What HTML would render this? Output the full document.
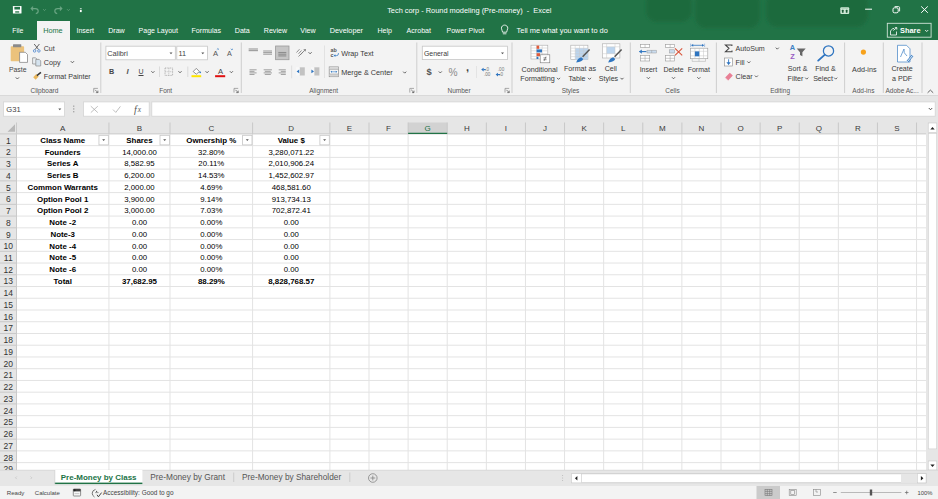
<!DOCTYPE html><html><head><meta charset="utf-8"><style>
*{margin:0;padding:0;box-sizing:border-box}
html,body{width:938px;height:499px;overflow:hidden;background:#e6e6e6;font-family:"Liberation Sans",sans-serif;position:relative;-webkit-font-smoothing:antialiased}
.a{position:absolute;white-space:nowrap}
.t{position:absolute;white-space:nowrap;line-height:1}
svg{position:absolute;left:0;top:0}
</style></head><body><div class="a" style="left:0;top:0;width:938px;height:39.5px;background:#217346"></div><div class="a" style="left:37.1px;top:21.1px;width:32.9px;height:19px;background:#f3f3f3"></div><div class="a" style="left:0;top:39.5px;width:938px;height:55.8px;background:#f3f3f3"></div><div class="a" style="left:0;top:95.3px;width:938px;height:1px;background:#d9d9d9"></div><svg width="938" height="499" viewBox="0 0 938 499"><defs><filter id="bl" x="-20%" y="-50%" width="140%" height="200%"><feGaussianBlur stdDeviation="1.6"/></filter></defs><g fill="#1e6a3e" filter="url(#bl)"><rect x="646" y="-8" width="46" height="30" rx="11"/><rect x="695" y="-8" width="65" height="36" rx="11"/><rect x="766" y="-8" width="102" height="35" rx="12"/></g><rect x="12.9" y="6.0" width="8.6" height="7.5" rx="0.6" fill="#fff"/><rect x="14.4" y="6.8" width="5.6" height="2.7" fill="#217346"/><rect x="15.2" y="11.3" width="4" height="1.3" fill="#217346"/><path d="M31.2,8.6 H35.3 Q38.2,8.6 38.2,11.1 Q38.2,13.4 35.8,13.6 M33.1,6.7 L31.2,8.6 L33.1,10.5" fill="none" stroke="#6aa583" stroke-width="1.15"/><path d="M43.20,9.25 L44.50,10.55 L45.80,9.25" fill="none" stroke="#6aa583" stroke-width="0.8"/><path d="M61.8,8.6 H57.7 Q54.8,8.6 54.8,11.1 Q54.8,13.4 57.2,13.6 M59.9,6.7 L61.8,8.6 L59.9,10.5" fill="none" stroke="#6aa583" stroke-width="1.15"/><path d="M67.10,9.25 L68.40,10.55 L69.70,9.25" fill="none" stroke="#6aa583" stroke-width="0.8"/><rect x="79.9" y="8.2" width="1.8" height="0.8" fill="#fff" opacity="0.8"/><rect x="79.9" y="9.8" width="1.8" height="2.3" fill="#fff"/><rect x="840.3" y="7.3" width="8.9" height="6.6" rx="1" fill="#cfe8d6"/><rect x="841.9" y="9.8" width="1.7" height="3" rx="0.5" fill="#1f5e3a"/><rect x="845.8" y="9.8" width="1.7" height="3" rx="0.5" fill="#1f5e3a"/><line x1="841.5" y1="8.4" x2="848" y2="8.4" stroke="#8fbf9f" stroke-width="0.5"/><line x1="865.1" y1="9.2" x2="872" y2="9.2" stroke="#fff" stroke-width="1"/><rect x="893" y="7.8" width="5.2" height="5" rx="1.4" fill="none" stroke="#fff" stroke-width="1"/><path d="M894.6,6.6 H898.5 Q899.6,6.6 899.6,7.7 V11.4" fill="none" stroke="#fff" stroke-width="0.9"/><path d="M921.2,6.4 L927.8,12.8 M927.8,6.4 L921.2,12.8" stroke="#fff" stroke-width="1"/><rect x="887.3" y="23.3" width="43.8" height="13.9" fill="none" stroke="#d0e3d7" stroke-width="0.9"/><path d="M890.5,35 V31 L893,28.2 L894.3,29 M890.5,35 H896.5 V31.5" fill="none" stroke="#fff" stroke-width="0.8"/><path d="M893.3,30.5 L896.8,27.6 M896.8,27.6 H894.8 M896.8,27.6 V29.6" fill="none" stroke="#fff" stroke-width="0.8"/><path d="M925.20,30.05 L926.70,31.55 L928.20,30.05" fill="none" stroke="#fff" stroke-width="0.9"/><path d="M502.6,32.2 C502.6,30.6 501.4,29.9 501.4,28.2 C501.4,26.4 502.9,25.1 504.6,25.1 C506.3,25.1 507.8,26.4 507.8,28.2 C507.8,29.9 506.6,30.6 506.6,32.2 Z" fill="none" stroke="#fff" stroke-width="0.85"/><line x1="502.8" y1="33.8" x2="506.4" y2="33.8" stroke="#fff" stroke-width="0.8"/><line x1="100.8" y1="42.5" x2="100.8" y2="93" stroke="#c9c9c9" stroke-width="0.9"/><line x1="241.3" y1="42.5" x2="241.3" y2="93" stroke="#c9c9c9" stroke-width="0.9"/><line x1="416.8" y1="42.5" x2="416.8" y2="93" stroke="#c9c9c9" stroke-width="0.9"/><line x1="512.0" y1="42.5" x2="512.0" y2="93" stroke="#c9c9c9" stroke-width="0.9"/><line x1="630.3" y1="42.5" x2="630.3" y2="93" stroke="#c9c9c9" stroke-width="0.9"/><line x1="716.4" y1="42.5" x2="716.4" y2="93" stroke="#c9c9c9" stroke-width="0.9"/><line x1="844.6" y1="42.5" x2="844.6" y2="93" stroke="#c9c9c9" stroke-width="0.9"/><line x1="883.3" y1="42.5" x2="883.3" y2="93" stroke="#c9c9c9" stroke-width="0.9"/><line x1="922.0" y1="42.5" x2="922.0" y2="93" stroke="#c9c9c9" stroke-width="0.9"/><path d="M93.7,92.6 V88.4 H97.9" fill="none" stroke="#777" stroke-width="0.6"/><path d="M95.10000000000001,89.8 L97.9,92.6 M97.9,90.6 V92.6 H95.9" fill="none" stroke="#555" stroke-width="0.7"/><path d="M234.0,92.6 V88.4 H238.2" fill="none" stroke="#777" stroke-width="0.6"/><path d="M235.4,89.8 L238.2,92.6 M238.2,90.6 V92.6 H236.2" fill="none" stroke="#555" stroke-width="0.7"/><path d="M409.8,92.6 V88.4 H414.0" fill="none" stroke="#777" stroke-width="0.6"/><path d="M411.2,89.8 L414.0,92.6 M414.0,90.6 V92.6 H412.0" fill="none" stroke="#555" stroke-width="0.7"/><path d="M505.0,92.6 V88.4 H509.2" fill="none" stroke="#777" stroke-width="0.6"/><path d="M506.4,89.8 L509.2,92.6 M509.2,90.6 V92.6 H507.2" fill="none" stroke="#555" stroke-width="0.7"/><rect x="10.7" y="46.2" width="13.4" height="15" rx="0.8" fill="#ebc27c"/><rect x="13" y="44.3" width="8.3" height="3" rx="0.5" fill="#8a8a8a"/><path d="M19.6,52.3 H25.3 L27.5,54.5 V62.4 H19.6 Z" fill="#fff" stroke="#7a7a7a" stroke-width="0.7"/><path d="M15.80,77.40 L17.40,79.00 L19.00,77.40" fill="none" stroke="#555" stroke-width="0.95"/><path d="M34.2,44 L38.6,49.6 M39.4,44 L35,49.6" stroke="#555" stroke-width="0.9" fill="none"/><circle cx="34.6" cy="50.9" r="1.25" fill="none" stroke="#5b8fd0" stroke-width="0.9"/><circle cx="38.9" cy="50.9" r="1.25" fill="none" stroke="#5b8fd0" stroke-width="0.9"/><path d="M32.6,57.8 H35.6 L36.8,59 V64 H32.6 Z" fill="#e9eef3" stroke="#888" stroke-width="0.7"/><path d="M35.8,59.4 H39.2 L40.7,60.9 V66 H35.8 Z" fill="#d5e3ef" stroke="#888" stroke-width="0.7"/><path d="M70.80,61.20 L72.40,62.80 L74.00,61.20" fill="none" stroke="#555" stroke-width="0.95"/><path d="M33.2,77.2 L36.3,74.1 L38.7,76.5 L35.6,79.7 Z" fill="#e9b65b"/><path d="M36.9,75.6 L40.9,72.4" stroke="#333" stroke-width="1.5"/><rect x="105.9" y="46.2" width="69.4" height="13.6" fill="#fff" stroke="#c6c6c6" stroke-width="0.8"/><rect x="176.8" y="46.2" width="30.6" height="13.6" fill="#fff" stroke="#c6c6c6" stroke-width="0.8"/><path d="M169.50,52.55 L172.50,52.55 L171.00,54.35Z" fill="#555"/><path d="M201.30,52.55 L204.30,52.55 L202.80,54.35Z" fill="#555"/><path d="M216.8,49.6 L217.9,48.6 L219,49.6" fill="none" stroke="#3c7fc4" stroke-width="0.8"/><path d="M230.8,48.8 L231.9,49.8 L233,48.8" fill="none" stroke="#3c7fc4" stroke-width="0.8"/><path d="M151.40,71.25 L152.90,72.75 L154.40,71.25" fill="none" stroke="#555" stroke-width="0.95"/><line x1="159.5" y1="66.5" x2="159.5" y2="77" stroke="#d0d0d0" stroke-width="0.7"/><rect x="165" y="68" width="7.6" height="7.4" fill="none" stroke="#999" stroke-width="0.7" stroke-dasharray="1,0.7"/><line x1="168.8" y1="68" x2="168.8" y2="75.4" stroke="#aaa" stroke-width="0.6" stroke-dasharray="1,0.7"/><line x1="165" y1="71.7" x2="172.6" y2="71.7" stroke="#aaa" stroke-width="0.6" stroke-dasharray="1,0.7"/><path d="M178.50,71.25 L180.00,72.75 L181.50,71.25" fill="none" stroke="#555" stroke-width="0.95"/><line x1="187.8" y1="66.5" x2="187.8" y2="77" stroke="#d0d0d0" stroke-width="0.7"/><path d="M193.2,71.5 L196.3,68.4 L199.4,71.5 L196.3,74.2 Z" fill="#fff" stroke="#666" stroke-width="0.7"/><circle cx="200.2" cy="72.3" r="0.9" fill="#3c7fc4"/><rect x="191.5" y="75.2" width="9.7" height="2" fill="#ffe600"/><path d="M205.60,71.25 L207.10,72.75 L208.60,71.25" fill="none" stroke="#555" stroke-width="0.95"/><rect x="215.1" y="75.2" width="10.1" height="2" fill="#e01010"/><path d="M229.90,71.25 L231.40,72.75 L232.90,71.25" fill="none" stroke="#555" stroke-width="0.95"/><line x1="248.65" y1="49.00" x2="257.95" y2="49.00" stroke="#a0a0a0" stroke-width="1.2"/><line x1="248.65" y1="50.60" x2="257.95" y2="50.60" stroke="#a0a0a0" stroke-width="1.2"/><line x1="263.20" y1="51.00" x2="272.00" y2="51.00" stroke="#a0a0a0" stroke-width="1.1"/><line x1="263.20" y1="52.60" x2="272.00" y2="52.60" stroke="#a0a0a0" stroke-width="1.1"/><line x1="263.20" y1="54.20" x2="272.00" y2="54.20" stroke="#a0a0a0" stroke-width="1.1"/><rect x="275.6" y="46" width="13.4" height="13.7" fill="#c6c6c6" stroke="#9a9a9a" stroke-width="0.8"/><line x1="278.30" y1="52.50" x2="286.30" y2="52.50" stroke="#8e8e8e" stroke-width="1.1"/><line x1="278.30" y1="54.20" x2="286.30" y2="54.20" stroke="#8e8e8e" stroke-width="1.1"/><line x1="278.30" y1="55.90" x2="286.30" y2="55.90" stroke="#8e8e8e" stroke-width="1.1"/><path d="M296.5,52.5 L299.5,49.2 M298.5,53.8 L301.5,50.5 M300.2,55 L303.2,51.8 M298.5,56.5 L305.5,49.5 M305.5,49.5 L303.6,49.7 M305.5,49.5 L305.3,51.4" stroke="#777" stroke-width="0.8" fill="none"/><path d="M308.60,52.25 L310.10,53.75 L311.60,52.25" fill="none" stroke="#555" stroke-width="0.95"/><line x1="249.50" y1="69.80" x2="256.60" y2="69.80" stroke="#a0a0a0" stroke-width="1.0"/><line x1="249.50" y1="71.35" x2="254.50" y2="71.35" stroke="#a0a0a0" stroke-width="1.0"/><line x1="249.50" y1="72.90" x2="256.60" y2="72.90" stroke="#a0a0a0" stroke-width="1.0"/><line x1="249.50" y1="74.45" x2="254.50" y2="74.45" stroke="#a0a0a0" stroke-width="1.0"/><line x1="263.65" y1="69.80" x2="271.95" y2="69.80" stroke="#a0a0a0" stroke-width="1.0"/><line x1="264.80" y1="71.35" x2="270.80" y2="71.35" stroke="#a0a0a0" stroke-width="1.0"/><line x1="263.65" y1="72.90" x2="271.95" y2="72.90" stroke="#a0a0a0" stroke-width="1.0"/><line x1="264.80" y1="74.45" x2="270.80" y2="74.45" stroke="#a0a0a0" stroke-width="1.0"/><line x1="278.70" y1="69.80" x2="285.80" y2="69.80" stroke="#a0a0a0" stroke-width="1.0"/><line x1="280.80" y1="71.35" x2="285.80" y2="71.35" stroke="#a0a0a0" stroke-width="1.0"/><line x1="278.70" y1="72.90" x2="285.80" y2="72.90" stroke="#a0a0a0" stroke-width="1.0"/><line x1="280.80" y1="74.45" x2="285.80" y2="74.45" stroke="#a0a0a0" stroke-width="1.0"/><line x1="291.6" y1="65.5" x2="291.6" y2="78.3" stroke="#d6d6d6" stroke-width="0.7"/><rect x="299.6" y="67.3" width="5.2" height="8.2" fill="#c2c2c2"/><rect x="296" y="67.3" width="3.6" height="8.2" fill="#f8f8f8"/><path d="M296.6,71.4 L299.2,69.6 V73.2Z" fill="#2f75c0"/><rect x="314.2" y="67.3" width="5.2" height="8.2" fill="#c2c2c2"/><rect x="311" y="67.3" width="3.2" height="8.2" fill="#f8f8f8"/><path d="M314,71.4 L311.4,69.6 V73.2Z" fill="#2f75c0"/><line x1="324.5" y1="45.5" x2="324.5" y2="78" stroke="#dadada" stroke-width="0.7"/><path d="M334.6,55.6 H336.6 Q338.4,55.6 338.4,53.9 V53" fill="none" stroke="#3c7fc4" stroke-width="0.8"/><path d="M333.6,55.6 L335.4,54.3 V56.9Z" fill="#3c7fc4"/><rect x="329.2" y="66.9" width="9.4" height="9.8" fill="#fff" stroke="#888" stroke-width="0.7"/><rect x="329.6" y="67.3" width="8.6" height="2.4" fill="#d4d4d4"/><rect x="329.6" y="73.9" width="8.6" height="2.4" fill="#d4d4d4"/><line x1="329.2" y1="69.7" x2="338.6" y2="69.7" stroke="#999" stroke-width="0.5"/><line x1="329.2" y1="73.9" x2="338.6" y2="73.9" stroke="#999" stroke-width="0.5"/><path d="M331,71.8 H336.8" fill="none" stroke="#3c7fc4" stroke-width="0.7"/><path d="M330.4,71.8 L332,70.8 V72.8Z M337.4,71.8 L335.8,70.8 V72.8Z" fill="#3c7fc4"/><path d="M403.20,71.65 L404.70,73.15 L406.20,71.65" fill="none" stroke="#555" stroke-width="0.95"/><rect x="422.3" y="46.2" width="85.3" height="13.4" fill="#fff" stroke="#c6c6c6" stroke-width="0.8"/><path d="M501.00,52.55 L504.00,52.55 L502.50,54.35Z" fill="#555"/><path d="M438.80,71.45 L440.30,72.95 L441.80,71.45" fill="none" stroke="#555" stroke-width="0.95"/><line x1="476.5" y1="66" x2="476.5" y2="78" stroke="#dcdcdc" stroke-width="0.7"/><path d="M481.2,69.6 L483.6,67.8 V71.4Z" fill="#2f75c0"/><path d="M483.4,69.6 H485.8" stroke="#2f75c0" stroke-width="1.2"/><path d="M495.6,74.6 L498,72.8 V76.4Z" fill="#2f75c0"/><path d="M497.8,74.6 H500.2" stroke="#2f75c0" stroke-width="1.2"/><g><rect x="531" y="45.2" width="16.8" height="13.8" fill="#fff" stroke="#aaa" stroke-width="0.6"/><line x1="531" y1="48.0" x2="547.8" y2="48.0" stroke="#c4c4c4" stroke-width="0.5"/><line x1="531" y1="50.8" x2="547.8" y2="50.8" stroke="#c4c4c4" stroke-width="0.5"/><line x1="531" y1="53.6" x2="547.8" y2="53.6" stroke="#c4c4c4" stroke-width="0.5"/><line x1="531" y1="56.4" x2="547.8" y2="56.4" stroke="#c4c4c4" stroke-width="0.5"/><line x1="536.6" y1="45.2" x2="536.6" y2="59" stroke="#c4c4c4" stroke-width="0.5"/><line x1="542.2" y1="45.2" x2="542.2" y2="59" stroke="#c4c4c4" stroke-width="0.5"/><rect x="536.6" y="45.6" width="2.6" height="3.2" fill="#e05a3a"/><rect x="536.6" y="49.4" width="5.4" height="3" fill="#2f75c0"/><rect x="536.6" y="53.2" width="3.4" height="3" fill="#e05a3a"/><rect x="536.6" y="56.8" width="1.8" height="2.2" fill="#2f75c0"/><rect x="540.2" y="54.8" width="9.6" height="8" fill="#fff" stroke="#777" stroke-width="0.6"/><path d="M543.4,57.9 H546.6 M543.4,59.7 H546.6 M546,56.6 L544,61" stroke="#333" stroke-width="0.5"/></g><path d="M557.00,77.85 L558.50,79.35 L560.00,77.85" fill="none" stroke="#555" stroke-width="0.95"/><g><rect x="570.8" y="45.2" width="17.1" height="14.4" fill="#fff" stroke="#aaa" stroke-width="0.6"/><rect x="575.2" y="48.2" width="12.7" height="11.4" fill="#bcd5ee"/><line x1="570.8" y1="48.2" x2="587.9" y2="48.2" stroke="#c8c8c8" stroke-width="0.5"/><line x1="570.8" y1="51.0" x2="587.9" y2="51.0" stroke="#c8c8c8" stroke-width="0.5"/><line x1="570.8" y1="53.8" x2="587.9" y2="53.8" stroke="#c8c8c8" stroke-width="0.5"/><line x1="570.8" y1="56.6" x2="587.9" y2="56.6" stroke="#c8c8c8" stroke-width="0.5"/><line x1="575.2" y1="45.2" x2="575.2" y2="59.6" stroke="#c8c8c8" stroke-width="0.5"/><line x1="579.5" y1="45.2" x2="579.5" y2="59.6" stroke="#c8c8c8" stroke-width="0.5"/><line x1="583.7" y1="45.2" x2="583.7" y2="59.6" stroke="#c8c8c8" stroke-width="0.5"/><path d="M582.6,56.8 L589.6,49.6" stroke="#555" stroke-width="1.5"/><path d="M576.2,62.4 Q577.5,58.2 581.2,57.2 L583.2,59 Q582.4,62 576.2,62.4Z" fill="#2f75c0"/></g><path d="M588.00,77.85 L589.50,79.35 L591.00,77.85" fill="none" stroke="#555" stroke-width="0.95"/><g><rect x="602.3" y="43.8" width="17.6" height="14.2" fill="#fff" stroke="#aaa" stroke-width="0.6"/><rect x="606.6" y="46.8" width="8.4" height="6.9" fill="#bcd5ee"/><path d="M602.3,46.8 H619.9 M602.3,53.7 H619.9 M606.6,43.8 V58 M615,43.8 V58" stroke="#c8c8c8" stroke-width="0.5"/><path d="M614.6,56.8 L621.6,49.6" stroke="#555" stroke-width="1.5"/><path d="M608.2,62.4 Q609.5,58.2 613.2,57.2 L615.2,59 Q614.4,62 608.2,62.4Z" fill="#2f75c0"/></g><path d="M620.50,77.85 L622.00,79.35 L623.50,77.85" fill="none" stroke="#555" stroke-width="0.95"/><rect x="640.4" y="44.4" width="9.3" height="3.2" fill="#fff" stroke="#999" stroke-width="0.6"/><line x1="645.05" y1="44.4" x2="645.05" y2="47.6" stroke="#999" stroke-width="0.5"/><rect x="640.4" y="55.6" width="9.3" height="5.4" fill="#fff" stroke="#999" stroke-width="0.6"/><line x1="645.05" y1="55.6" x2="645.05" y2="61.0" stroke="#999" stroke-width="0.5"/><line x1="640.4" y1="58.300000000000004" x2="649.6999999999999" y2="58.300000000000004" stroke="#999" stroke-width="0.5"/><rect x="647" y="50.2" width="9.4" height="2.8" fill="#c9dcef" stroke="#999" stroke-width="0.5"/><line x1="651.7" y1="50.2" x2="651.7" y2="53" stroke="#999" stroke-width="0.5"/><path d="M639.4,51.6 H646.4" stroke="#2f75c0" stroke-width="1.1"/><path d="M639,51.6 L641.8,49.4 V53.8Z" fill="#2f75c0"/><path d="M646.90,77.25 L648.40,78.75 L649.90,77.25" fill="none" stroke="#555" stroke-width="0.95"/><rect x="665.6" y="44.4" width="9.1" height="3.2" fill="#fff" stroke="#999" stroke-width="0.6"/><line x1="670.15" y1="44.4" x2="670.15" y2="47.6" stroke="#999" stroke-width="0.5"/><rect x="665.6" y="55.6" width="9.1" height="5.4" fill="#fff" stroke="#999" stroke-width="0.6"/><line x1="670.15" y1="55.6" x2="670.15" y2="61.0" stroke="#999" stroke-width="0.5"/><line x1="665.6" y1="58.300000000000004" x2="674.7" y2="58.300000000000004" stroke="#999" stroke-width="0.5"/><rect x="669.4" y="49.8" width="5.3" height="3.2" fill="#c9dcef" stroke="#999" stroke-width="0.5"/><path d="M675,48.4 L682.2,55.4 M682.2,48.4 L675,55.4" stroke="#d9543a" stroke-width="1.1"/><path d="M672.00,77.25 L673.50,78.75 L675.00,77.25" fill="none" stroke="#555" stroke-width="0.95"/><rect x="690.6" y="48.2" width="17.2" height="10.5" fill="#fff" stroke="#999" stroke-width="0.6"/><path d="M690.6,51.3 H707.8 M690.6,55.8 H707.8 M694.9,48.2 V58.7 M699.3,48.2 V58.7 M703.5,48.2 V58.7" stroke="#c4c4c4" stroke-width="0.5"/><rect x="694.9" y="51.4" width="4.4" height="4.9" fill="#2f75c0"/><path d="M692.2,58.7 V61.4 H699 V58.7 M699,61.4 H705.5 V58.7" fill="none" stroke="#aaa" stroke-width="0.5"/><path d="M691.6,45.3 H703.6" stroke="#2f75c0" stroke-width="0.8"/><path d="M691.2,45.3 L693.2,43.9 V46.7Z M704,45.3 L702,43.9 V46.7Z" fill="#2f75c0"/><path d="M690.6,43.6 V47 M704.6,43.6 V47" stroke="#5a8fd0" stroke-width="0.5"/><path d="M697.30,77.25 L698.80,78.75 L700.30,77.25" fill="none" stroke="#555" stroke-width="0.95"/><path d="M731.9,46.1 V44.9 H725.4 L729,48.3 L725.4,51.8 H732 V50.5" fill="none" stroke="#444" stroke-width="1.05"/><path d="M775.80,47.65 L777.30,49.15 L778.80,47.65" fill="none" stroke="#555" stroke-width="0.95"/><rect x="724.6" y="58" width="8" height="8" fill="#fff" stroke="#888" stroke-width="0.6"/><path d="M728.6,59.3 V64.2" stroke="#2f75c0" stroke-width="0.9"/><path d="M726.4,62.3 H730.8 L728.6,65Z" fill="#2f75c0"/><path d="M747.30,61.45 L748.80,62.95 L750.30,61.45" fill="none" stroke="#555" stroke-width="0.95"/><path d="M725.2,77.6 L729.8,72.8 L732.8,75.6 L728.2,80.4 Z" fill="#e87f95"/><path d="M725.2,77.6 L727.6,80 L728.2,80.4" fill="none" stroke="#f3b4c2" stroke-width="0.5"/><path d="M754.90,75.55 L756.40,77.05 L757.90,75.55" fill="none" stroke="#555" stroke-width="0.95"/><path d="M796.7,48.4 H805.7 L802.4,52.3 V56.2 L800,55 V52.3 Z" fill="#666"/><path d="M805.20,77.65 L806.70,79.15 L808.20,77.65" fill="none" stroke="#555" stroke-width="0.95"/><circle cx="828.5" cy="50.9" r="5.1" fill="none" stroke="#2f75c0" stroke-width="1.25"/><line x1="824.6" y1="54.9" x2="818.2" y2="60.6" stroke="#2f75c0" stroke-width="1.9" stroke-linecap="round"/><path d="M834.20,77.65 L835.70,79.15 L837.20,77.65" fill="none" stroke="#555" stroke-width="0.95"/><circle cx="863.4" cy="52.1" r="2.6" fill="#f7a21b"/><path d="M897.5,45.3 H906.5 L910,48.8 V62 H897.5 Z" fill="#fff" stroke="#3c7fc4" stroke-width="0.7"/><path d="M900.5,57 Q903,51 904,49 Q903,53 907,56" fill="none" stroke="#3c7fc4" stroke-width="0.7"/><path d="M907.5,61.5 L912.5,55.5" stroke="#3c7fc4" stroke-width="2.2"/><path d="M907.5,61.5 L912.5,55.5" stroke="#fff" stroke-width="0.9"/><path d="M927.6,92.8 L930.4,90.1 L933.2,92.8" fill="none" stroke="#555" stroke-width="0.9"/></svg><div class="t" style="left:319.30px;width:300px;text-align:center;top:7px;font-size:7.4px;color:#fff;font-weight:normal;">Tech corp - Round modeling (Pre-money)&nbsp; - &nbsp;Excel</div><div class="t" style="left:900.00px;top:27px;font-size:7.4px;color:#fff;font-weight:bold;">Share</div><div class="t" style="left:12.20px;top:28px;font-size:6.9px;color:#fff;font-weight:normal;">File</div><div class="t" style="left:76.50px;top:27px;font-size:7.0px;color:#fff;font-weight:normal;">Insert</div><div class="t" style="left:108.20px;top:28px;font-size:7.1px;color:#fff;font-weight:normal;">Draw</div><div class="t" style="left:138.60px;top:27px;font-size:7.0px;color:#fff;font-weight:normal;">Page Layout</div><div class="t" style="left:191.50px;top:28px;font-size:7.1px;color:#fff;font-weight:normal;">Formulas</div><div class="t" style="left:234.80px;top:28px;font-size:7.1px;color:#fff;font-weight:normal;">Data</div><div class="t" style="left:263.80px;top:28px;font-size:7.1px;color:#fff;font-weight:normal;">Review</div><div class="t" style="left:300.30px;top:28px;font-size:7.1px;color:#fff;font-weight:normal;">View</div><div class="t" style="left:329.70px;top:27px;font-size:7.3px;color:#fff;font-weight:normal;">Developer</div><div class="t" style="left:377.40px;top:28px;font-size:7.1px;color:#fff;font-weight:normal;">Help</div><div class="t" style="left:406.60px;top:28px;font-size:7.1px;color:#fff;font-weight:normal;">Acrobat</div><div class="t" style="left:446.50px;top:27px;font-size:7.05px;color:#fff;font-weight:normal;">Power Pivot</div><div class="t" style="left:516.60px;top:27px;font-size:7.4px;color:#fff;font-weight:normal;">Tell me what you want to do</div><div class="t" style="left:43.20px;top:27px;font-size:7.3px;color:#217346;font-weight:normal;">Home</div><div class="t" style="left:-105.60px;width:300px;text-align:center;top:88px;font-size:6.5px;color:#555;font-weight:normal;">Clipboard</div><div class="t" style="left:15.70px;width:300px;text-align:center;top:88px;font-size:6.5px;color:#555;font-weight:normal;">Font</div><div class="t" style="left:173.70px;width:300px;text-align:center;top:88px;font-size:6.5px;color:#555;font-weight:normal;">Alignment</div><div class="t" style="left:309.00px;width:300px;text-align:center;top:88px;font-size:6.5px;color:#555;font-weight:normal;">Number</div><div class="t" style="left:420.50px;width:300px;text-align:center;top:88px;font-size:6.5px;color:#555;font-weight:normal;">Styles</div><div class="t" style="left:522.50px;width:300px;text-align:center;top:88px;font-size:6.5px;color:#555;font-weight:normal;">Cells</div><div class="t" style="left:630.10px;width:300px;text-align:center;top:88px;font-size:6.5px;color:#555;font-weight:normal;">Editing</div><div class="t" style="left:713.40px;width:300px;text-align:center;top:88px;font-size:6.5px;color:#555;font-weight:normal;">Add-ins</div><div class="t" style="left:752.10px;width:300px;text-align:center;top:88px;font-size:6.5px;color:#555;font-weight:normal;">Adobe Ac...</div><div class="t" style="left:-132.30px;width:300px;text-align:center;top:67px;font-size:6.9px;color:#444;font-weight:normal;">Paste</div><div class="t" style="left:43.80px;top:45px;font-size:7.0px;color:#3a3a3a;font-weight:normal;">Cut</div><div class="t" style="left:43.80px;top:59px;font-size:7.2px;color:#3a3a3a;font-weight:normal;">Copy</div><div class="t" style="left:43.80px;top:74px;font-size:7.1px;color:#3a3a3a;font-weight:normal;">Format Painter</div><div class="t" style="left:107.20px;top:50px;font-size:7.3px;color:#444;font-weight:normal;">Calibri</div><div class="t" style="left:178.60px;top:50px;font-size:7.3px;color:#444;font-weight:normal;">11</div><div class="t" style="left:65.50px;width:300px;text-align:center;top:50px;font-size:7.6px;color:#555;font-weight:normal;">A</div><div class="t" style="left:79.50px;width:300px;text-align:center;top:50px;font-size:7.2px;color:#555;font-weight:normal;">A</div><div class="t" style="left:-38.40px;width:300px;text-align:center;top:68px;font-size:7.2px;color:#444;font-weight:bold;">B</div><div class="t" style="left:-22.40px;width:300px;text-align:center;top:68px;font-size:7.8px;color:#555;font-weight:bold;font-style:italic">I</div><div class="t" style="left:-9.00px;width:300px;text-align:center;top:68px;font-size:7.0px;color:#444;font-weight:normal;text-decoration:underline">U</div><div class="t" style="left:70.60px;width:300px;text-align:center;top:68px;font-size:7.6px;color:#444;font-weight:normal;">A</div><div class="t" style="left:330.60px;top:48px;font-size:5.4px;color:#555;font-weight:bold;">ab</div><div class="t" style="left:330.60px;top:53px;font-size:5.4px;color:#555;font-weight:bold;">c</div><div class="t" style="left:341.20px;top:50px;font-size:7.25px;color:#3a3a3a;font-weight:normal;">Wrap Text</div><div class="t" style="left:341.20px;top:69px;font-size:7.3px;color:#3a3a3a;font-weight:normal;">Merge &amp; Center</div><div class="t" style="left:424.00px;top:51px;font-size:6.9px;color:#3a3a3a;font-weight:normal;">General</div><div class="t" style="left:279.10px;width:300px;text-align:center;top:67px;font-size:9.4px;color:#555;font-weight:bold;">$</div><div class="t" style="left:303.10px;width:300px;text-align:center;top:68px;font-size:10.2px;color:#8a8a8a;font-weight:normal;">%</div><div class="t" style="left:317.60px;width:300px;text-align:center;top:62px;font-size:11px;color:#444;font-weight:bold;">,</div><div class="t" style="left:485.30px;top:68px;font-size:4.6px;color:#777;font-weight:normal;">.0</div><div class="t" style="left:484.00px;top:73px;font-size:4.6px;color:#777;font-weight:normal;">.00</div><div class="t" style="left:497.80px;top:68px;font-size:4.6px;color:#777;font-weight:normal;">.00</div><div class="t" style="left:499.30px;top:73px;font-size:4.6px;color:#777;font-weight:normal;">.0</div><div class="t" style="left:389.50px;width:300px;text-align:center;top:66px;font-size:7.2px;color:#3a3a3a;font-weight:normal;">Conditional</div><div class="t" style="left:387.50px;width:300px;text-align:center;top:75px;font-size:7.2px;color:#3a3a3a;font-weight:normal;">Formatting</div><div class="t" style="left:430.00px;width:300px;text-align:center;top:66px;font-size:7.1px;color:#3a3a3a;font-weight:normal;">Format as</div><div class="t" style="left:427.00px;width:300px;text-align:center;top:76px;font-size:7.1px;color:#3a3a3a;font-weight:normal;">Table</div><div class="t" style="left:460.80px;width:300px;text-align:center;top:66px;font-size:7.1px;color:#3a3a3a;font-weight:normal;">Cell</div><div class="t" style="left:458.50px;width:300px;text-align:center;top:76px;font-size:7.1px;color:#3a3a3a;font-weight:normal;">Styles</div><div class="t" style="left:498.40px;width:300px;text-align:center;top:66px;font-size:7.0px;color:#3a3a3a;font-weight:normal;">Insert</div><div class="t" style="left:523.50px;width:300px;text-align:center;top:66px;font-size:7.0px;color:#3a3a3a;font-weight:normal;">Delete</div><div class="t" style="left:548.80px;width:300px;text-align:center;top:66px;font-size:7.0px;color:#3a3a3a;font-weight:normal;">Format</div><div class="t" style="left:735.60px;top:46px;font-size:7.1px;color:#3a3a3a;font-weight:normal;">AutoSum</div><div class="t" style="left:735.60px;top:60px;font-size:7.1px;color:#3a3a3a;font-weight:normal;">Fill</div><div class="t" style="left:735.60px;top:74px;font-size:7.1px;color:#3a3a3a;font-weight:normal;">Clear</div><div class="t" style="left:642.50px;width:300px;text-align:center;top:44px;font-size:7.4px;color:#3c7fc4;font-weight:bold;">A</div><div class="t" style="left:642.50px;width:300px;text-align:center;top:53px;font-size:7.4px;color:#9a5bc4;font-weight:bold;">Z</div><div class="t" style="left:647.70px;width:300px;text-align:center;top:66px;font-size:7.1px;color:#3a3a3a;font-weight:normal;">Sort &amp;</div><div class="t" style="left:645.50px;width:300px;text-align:center;top:76px;font-size:7.1px;color:#3a3a3a;font-weight:normal;">Filter</div><div class="t" style="left:675.40px;width:300px;text-align:center;top:66px;font-size:7.1px;color:#3a3a3a;font-weight:normal;">Find &amp;</div><div class="t" style="left:673.00px;width:300px;text-align:center;top:76px;font-size:7.1px;color:#3a3a3a;font-weight:normal;">Select</div><div class="t" style="left:714.30px;width:300px;text-align:center;top:66px;font-size:7.2px;color:#3a3a3a;font-weight:normal;">Add-ins</div><div class="t" style="left:752.10px;width:300px;text-align:center;top:66px;font-size:7.1px;color:#3a3a3a;font-weight:normal;">Create</div><div class="t" style="left:752.10px;width:300px;text-align:center;top:76px;font-size:7.1px;color:#3a3a3a;font-weight:normal;">a PDF</div><svg width="938" height="499" viewBox="0 0 938 499"><rect x="3.4" y="101.9" width="61.2" height="14.3" fill="#fff" stroke="#d4d4d4" stroke-width="0.8"/><path d="M58.30,108.45 L61.30,108.45 L59.80,110.25Z" fill="#555"/><g fill="#888"><rect x="73.2" y="105.6" width="1.1" height="1.1"/><rect x="73.2" y="108.4" width="1.1" height="1.1"/><rect x="73.2" y="111.2" width="1.1" height="1.1"/></g><rect x="83.5" y="101.9" width="65.7" height="14.3" fill="#fff" stroke="#d4d4d4" stroke-width="0.8"/><path d="M90.8,106.2 L97.8,112.6 M97.8,106.2 L90.8,112.6" stroke="#aaa" stroke-width="0.75"/><path d="M113,109.6 L115.8,112.4 L120.4,106.4" fill="none" stroke="#aaa" stroke-width="0.75"/><rect x="151.8" y="101.9" width="783.4" height="14.3" fill="#fff" stroke="#d4d4d4" stroke-width="0.8"/><path d="M928.80,108.05 L930.50,109.75 L932.20,108.05" fill="none" stroke="#444" stroke-width="0.95"/><rect x="16" y="133.9" width="910" height="336.1" fill="#fff"/><rect x="0" y="122.5" width="926" height="11.400000000000006" fill="#e6e6e6"/><rect x="0" y="133.9" width="16" height="336.1" fill="#e6e6e6"/><rect x="408.12" y="122.5" width="39.10999999999996" height="11.400000000000006" fill="#d2d2d2"/><line x1="16" y1="145.64" x2="926" y2="145.64" stroke="#e3e3e3" stroke-width="1"/><line x1="0" y1="145.64" x2="16" y2="145.64" stroke="#c8c8c8" stroke-width="1"/><line x1="16" y1="157.38" x2="926" y2="157.38" stroke="#e3e3e3" stroke-width="1"/><line x1="0" y1="157.38" x2="16" y2="157.38" stroke="#c8c8c8" stroke-width="1"/><line x1="16" y1="169.12" x2="926" y2="169.12" stroke="#e3e3e3" stroke-width="1"/><line x1="0" y1="169.12" x2="16" y2="169.12" stroke="#c8c8c8" stroke-width="1"/><line x1="16" y1="180.86" x2="926" y2="180.86" stroke="#e3e3e3" stroke-width="1"/><line x1="0" y1="180.86" x2="16" y2="180.86" stroke="#c8c8c8" stroke-width="1"/><line x1="16" y1="192.60" x2="926" y2="192.60" stroke="#e3e3e3" stroke-width="1"/><line x1="0" y1="192.60" x2="16" y2="192.60" stroke="#c8c8c8" stroke-width="1"/><line x1="16" y1="204.34" x2="926" y2="204.34" stroke="#e3e3e3" stroke-width="1"/><line x1="0" y1="204.34" x2="16" y2="204.34" stroke="#c8c8c8" stroke-width="1"/><line x1="16" y1="216.08" x2="926" y2="216.08" stroke="#e3e3e3" stroke-width="1"/><line x1="0" y1="216.08" x2="16" y2="216.08" stroke="#c8c8c8" stroke-width="1"/><line x1="16" y1="227.82" x2="926" y2="227.82" stroke="#e3e3e3" stroke-width="1"/><line x1="0" y1="227.82" x2="16" y2="227.82" stroke="#c8c8c8" stroke-width="1"/><line x1="16" y1="239.56" x2="926" y2="239.56" stroke="#e3e3e3" stroke-width="1"/><line x1="0" y1="239.56" x2="16" y2="239.56" stroke="#c8c8c8" stroke-width="1"/><line x1="16" y1="251.30" x2="926" y2="251.30" stroke="#e3e3e3" stroke-width="1"/><line x1="0" y1="251.30" x2="16" y2="251.30" stroke="#c8c8c8" stroke-width="1"/><line x1="16" y1="263.04" x2="926" y2="263.04" stroke="#e3e3e3" stroke-width="1"/><line x1="0" y1="263.04" x2="16" y2="263.04" stroke="#c8c8c8" stroke-width="1"/><line x1="16" y1="274.78" x2="926" y2="274.78" stroke="#e3e3e3" stroke-width="1"/><line x1="0" y1="274.78" x2="16" y2="274.78" stroke="#c8c8c8" stroke-width="1"/><line x1="16" y1="286.52" x2="926" y2="286.52" stroke="#e3e3e3" stroke-width="1"/><line x1="0" y1="286.52" x2="16" y2="286.52" stroke="#c8c8c8" stroke-width="1"/><line x1="16" y1="298.26" x2="926" y2="298.26" stroke="#e3e3e3" stroke-width="1"/><line x1="0" y1="298.26" x2="16" y2="298.26" stroke="#c8c8c8" stroke-width="1"/><line x1="16" y1="310.00" x2="926" y2="310.00" stroke="#e3e3e3" stroke-width="1"/><line x1="0" y1="310.00" x2="16" y2="310.00" stroke="#c8c8c8" stroke-width="1"/><line x1="16" y1="321.74" x2="926" y2="321.74" stroke="#e3e3e3" stroke-width="1"/><line x1="0" y1="321.74" x2="16" y2="321.74" stroke="#c8c8c8" stroke-width="1"/><line x1="16" y1="333.48" x2="926" y2="333.48" stroke="#e3e3e3" stroke-width="1"/><line x1="0" y1="333.48" x2="16" y2="333.48" stroke="#c8c8c8" stroke-width="1"/><line x1="16" y1="345.22" x2="926" y2="345.22" stroke="#e3e3e3" stroke-width="1"/><line x1="0" y1="345.22" x2="16" y2="345.22" stroke="#c8c8c8" stroke-width="1"/><line x1="16" y1="356.96" x2="926" y2="356.96" stroke="#e3e3e3" stroke-width="1"/><line x1="0" y1="356.96" x2="16" y2="356.96" stroke="#c8c8c8" stroke-width="1"/><line x1="16" y1="368.70" x2="926" y2="368.70" stroke="#e3e3e3" stroke-width="1"/><line x1="0" y1="368.70" x2="16" y2="368.70" stroke="#c8c8c8" stroke-width="1"/><line x1="16" y1="380.44" x2="926" y2="380.44" stroke="#e3e3e3" stroke-width="1"/><line x1="0" y1="380.44" x2="16" y2="380.44" stroke="#c8c8c8" stroke-width="1"/><line x1="16" y1="392.18" x2="926" y2="392.18" stroke="#e3e3e3" stroke-width="1"/><line x1="0" y1="392.18" x2="16" y2="392.18" stroke="#c8c8c8" stroke-width="1"/><line x1="16" y1="403.92" x2="926" y2="403.92" stroke="#e3e3e3" stroke-width="1"/><line x1="0" y1="403.92" x2="16" y2="403.92" stroke="#c8c8c8" stroke-width="1"/><line x1="16" y1="415.66" x2="926" y2="415.66" stroke="#e3e3e3" stroke-width="1"/><line x1="0" y1="415.66" x2="16" y2="415.66" stroke="#c8c8c8" stroke-width="1"/><line x1="16" y1="427.40" x2="926" y2="427.40" stroke="#e3e3e3" stroke-width="1"/><line x1="0" y1="427.40" x2="16" y2="427.40" stroke="#c8c8c8" stroke-width="1"/><line x1="16" y1="439.14" x2="926" y2="439.14" stroke="#e3e3e3" stroke-width="1"/><line x1="0" y1="439.14" x2="16" y2="439.14" stroke="#c8c8c8" stroke-width="1"/><line x1="16" y1="450.88" x2="926" y2="450.88" stroke="#e3e3e3" stroke-width="1"/><line x1="0" y1="450.88" x2="16" y2="450.88" stroke="#c8c8c8" stroke-width="1"/><line x1="16" y1="462.62" x2="926" y2="462.62" stroke="#e3e3e3" stroke-width="1"/><line x1="0" y1="462.62" x2="16" y2="462.62" stroke="#c8c8c8" stroke-width="1"/><line x1="108.95" y1="133.9" x2="108.95" y2="470" stroke="#e3e3e3" stroke-width="1"/><line x1="108.95" y1="122.5" x2="108.95" y2="133.9" stroke="#c8c8c8" stroke-width="1"/><line x1="170.00" y1="133.9" x2="170.00" y2="470" stroke="#e3e3e3" stroke-width="1"/><line x1="170.00" y1="122.5" x2="170.00" y2="133.9" stroke="#c8c8c8" stroke-width="1"/><line x1="252.60" y1="133.9" x2="252.60" y2="470" stroke="#e3e3e3" stroke-width="1"/><line x1="252.60" y1="122.5" x2="252.60" y2="133.9" stroke="#c8c8c8" stroke-width="1"/><line x1="329.90" y1="133.9" x2="329.90" y2="470" stroke="#e3e3e3" stroke-width="1"/><line x1="329.90" y1="122.5" x2="329.90" y2="133.9" stroke="#c8c8c8" stroke-width="1"/><line x1="369.01" y1="133.9" x2="369.01" y2="470" stroke="#e3e3e3" stroke-width="1"/><line x1="369.01" y1="122.5" x2="369.01" y2="133.9" stroke="#c8c8c8" stroke-width="1"/><line x1="408.12" y1="133.9" x2="408.12" y2="470" stroke="#e3e3e3" stroke-width="1"/><line x1="408.12" y1="122.5" x2="408.12" y2="133.9" stroke="#c8c8c8" stroke-width="1"/><line x1="447.23" y1="133.9" x2="447.23" y2="470" stroke="#e3e3e3" stroke-width="1"/><line x1="447.23" y1="122.5" x2="447.23" y2="133.9" stroke="#c8c8c8" stroke-width="1"/><line x1="486.34" y1="133.9" x2="486.34" y2="470" stroke="#e3e3e3" stroke-width="1"/><line x1="486.34" y1="122.5" x2="486.34" y2="133.9" stroke="#c8c8c8" stroke-width="1"/><line x1="525.45" y1="133.9" x2="525.45" y2="470" stroke="#e3e3e3" stroke-width="1"/><line x1="525.45" y1="122.5" x2="525.45" y2="133.9" stroke="#c8c8c8" stroke-width="1"/><line x1="564.56" y1="133.9" x2="564.56" y2="470" stroke="#e3e3e3" stroke-width="1"/><line x1="564.56" y1="122.5" x2="564.56" y2="133.9" stroke="#c8c8c8" stroke-width="1"/><line x1="603.67" y1="133.9" x2="603.67" y2="470" stroke="#e3e3e3" stroke-width="1"/><line x1="603.67" y1="122.5" x2="603.67" y2="133.9" stroke="#c8c8c8" stroke-width="1"/><line x1="642.78" y1="133.9" x2="642.78" y2="470" stroke="#e3e3e3" stroke-width="1"/><line x1="642.78" y1="122.5" x2="642.78" y2="133.9" stroke="#c8c8c8" stroke-width="1"/><line x1="681.89" y1="133.9" x2="681.89" y2="470" stroke="#e3e3e3" stroke-width="1"/><line x1="681.89" y1="122.5" x2="681.89" y2="133.9" stroke="#c8c8c8" stroke-width="1"/><line x1="721.00" y1="133.9" x2="721.00" y2="470" stroke="#e3e3e3" stroke-width="1"/><line x1="721.00" y1="122.5" x2="721.00" y2="133.9" stroke="#c8c8c8" stroke-width="1"/><line x1="760.11" y1="133.9" x2="760.11" y2="470" stroke="#e3e3e3" stroke-width="1"/><line x1="760.11" y1="122.5" x2="760.11" y2="133.9" stroke="#c8c8c8" stroke-width="1"/><line x1="799.22" y1="133.9" x2="799.22" y2="470" stroke="#e3e3e3" stroke-width="1"/><line x1="799.22" y1="122.5" x2="799.22" y2="133.9" stroke="#c8c8c8" stroke-width="1"/><line x1="838.33" y1="133.9" x2="838.33" y2="470" stroke="#e3e3e3" stroke-width="1"/><line x1="838.33" y1="122.5" x2="838.33" y2="133.9" stroke="#c8c8c8" stroke-width="1"/><line x1="877.44" y1="133.9" x2="877.44" y2="470" stroke="#e3e3e3" stroke-width="1"/><line x1="877.44" y1="122.5" x2="877.44" y2="133.9" stroke="#c8c8c8" stroke-width="1"/><line x1="916.55" y1="133.9" x2="916.55" y2="470" stroke="#e3e3e3" stroke-width="1"/><line x1="916.55" y1="122.5" x2="916.55" y2="133.9" stroke="#c8c8c8" stroke-width="1"/><line x1="0" y1="133.9" x2="926" y2="133.9" stroke="#cacaca" stroke-width="1"/><line x1="16.5" y1="122.5" x2="16.5" y2="470" stroke="#cacaca" stroke-width="1"/><line x1="408.12" y1="133.4" x2="447.22999999999996" y2="133.4" stroke="#217346" stroke-width="1.3"/><polygon points="15,124.3 15,131.8 7.5,131.8" fill="#b8b8b8"/><rect x="98.95" y="135.30" width="9.4" height="9.6" fill="#fff" stroke="#c5c5c5" stroke-width="0.8"/><path d="M102.15,139.15 L105.15,139.15 L103.65,140.95Z" fill="#555"/><rect x="160.00" y="135.30" width="9.4" height="9.6" fill="#fff" stroke="#c5c5c5" stroke-width="0.8"/><path d="M163.20,139.15 L166.20,139.15 L164.70,140.95Z" fill="#555"/><rect x="242.60" y="135.30" width="9.4" height="9.6" fill="#fff" stroke="#c5c5c5" stroke-width="0.8"/><path d="M245.80,139.15 L248.80,139.15 L247.30,140.95Z" fill="#555"/><rect x="319.90" y="135.30" width="9.4" height="9.6" fill="#fff" stroke="#c5c5c5" stroke-width="0.8"/><path d="M323.10,139.15 L326.10,139.15 L324.60,140.95Z" fill="#555"/><rect x="926" y="122" width="12" height="348" fill="#e6e6e6"/><rect x="928.2" y="123" width="8.6" height="9.6" fill="#fff" stroke="#c8c8c8" stroke-width="0.6"/><path d="M930.3,129.4 H934.7 L932.5,127.0Z" fill="#222"/><rect x="928.4" y="133.4" width="8.3" height="315.5" fill="#fff" stroke="#cfcfcf" stroke-width="0.6"/><rect x="928.2" y="461" width="8.6" height="9" fill="#fff" stroke="#c8c8c8" stroke-width="0.6"/><path d="M930.3,464.6 H934.7 L932.5,467.0Z" fill="#222"/></svg><div class="t" style="left:6.30px;top:106px;font-size:7.6px;color:#444;font-weight:normal;">G31</div><div class="t" style="left:133.90px;top:105px;font-size:10px;color:#555;font-weight:normal;font-family:'Liberation Serif',serif"><i>f</i></div><div class="t" style="left:137.80px;top:106px;font-size:7.4px;color:#555;font-weight:normal;font-family:'Liberation Serif',serif"><i>x</i></div><div class="t" style="left:52.73px;width:20px;text-align:center;top:124.60px;font-size:8px;color:#3a3a3a">A</div><div class="t" style="left:129.47px;width:20px;text-align:center;top:124.60px;font-size:8px;color:#3a3a3a">B</div><div class="t" style="left:201.30px;width:20px;text-align:center;top:124.60px;font-size:8px;color:#3a3a3a">C</div><div class="t" style="left:281.25px;width:20px;text-align:center;top:124.60px;font-size:8px;color:#3a3a3a">D</div><div class="t" style="left:339.45px;width:20px;text-align:center;top:124.60px;font-size:8px;color:#3a3a3a">E</div><div class="t" style="left:378.56px;width:20px;text-align:center;top:124.60px;font-size:8px;color:#3a3a3a">F</div><div class="t" style="left:417.67px;width:20px;text-align:center;top:124.60px;font-size:8px;color:#217346">G</div><div class="t" style="left:456.78px;width:20px;text-align:center;top:124.60px;font-size:8px;color:#3a3a3a">H</div><div class="t" style="left:495.89px;width:20px;text-align:center;top:124.60px;font-size:8px;color:#3a3a3a">I</div><div class="t" style="left:535.00px;width:20px;text-align:center;top:124.60px;font-size:8px;color:#3a3a3a">J</div><div class="t" style="left:574.12px;width:20px;text-align:center;top:124.60px;font-size:8px;color:#3a3a3a">K</div><div class="t" style="left:613.22px;width:20px;text-align:center;top:124.60px;font-size:8px;color:#3a3a3a">L</div><div class="t" style="left:652.34px;width:20px;text-align:center;top:124.60px;font-size:8px;color:#3a3a3a">M</div><div class="t" style="left:691.44px;width:20px;text-align:center;top:124.60px;font-size:8px;color:#3a3a3a">N</div><div class="t" style="left:730.55px;width:20px;text-align:center;top:124.60px;font-size:8px;color:#3a3a3a">O</div><div class="t" style="left:769.66px;width:20px;text-align:center;top:124.60px;font-size:8px;color:#3a3a3a">P</div><div class="t" style="left:808.77px;width:20px;text-align:center;top:124.60px;font-size:8px;color:#3a3a3a">Q</div><div class="t" style="left:847.88px;width:20px;text-align:center;top:124.60px;font-size:8px;color:#3a3a3a">R</div><div class="t" style="left:886.99px;width:20px;text-align:center;top:124.60px;font-size:8px;color:#3a3a3a">S</div><div class="t" style="left:0;width:16.5px;text-align:center;top:136.60px;font-size:8.5px;color:#333">1</div><div class="t" style="left:0;width:16.5px;text-align:center;top:148.34px;font-size:8.5px;color:#333">2</div><div class="t" style="left:0;width:16.5px;text-align:center;top:160.08px;font-size:8.5px;color:#333">3</div><div class="t" style="left:0;width:16.5px;text-align:center;top:171.82px;font-size:8.5px;color:#333">4</div><div class="t" style="left:0;width:16.5px;text-align:center;top:183.56px;font-size:8.5px;color:#333">5</div><div class="t" style="left:0;width:16.5px;text-align:center;top:195.30px;font-size:8.5px;color:#333">6</div><div class="t" style="left:0;width:16.5px;text-align:center;top:207.04px;font-size:8.5px;color:#333">7</div><div class="t" style="left:0;width:16.5px;text-align:center;top:218.78px;font-size:8.5px;color:#333">8</div><div class="t" style="left:0;width:16.5px;text-align:center;top:230.52px;font-size:8.5px;color:#333">9</div><div class="t" style="left:0;width:16.5px;text-align:center;top:242.26px;font-size:8.5px;color:#333">10</div><div class="t" style="left:0;width:16.5px;text-align:center;top:254.00px;font-size:8.5px;color:#333">11</div><div class="t" style="left:0;width:16.5px;text-align:center;top:265.74px;font-size:8.5px;color:#333">12</div><div class="t" style="left:0;width:16.5px;text-align:center;top:277.48px;font-size:8.5px;color:#333">13</div><div class="t" style="left:0;width:16.5px;text-align:center;top:289.22px;font-size:8.5px;color:#333">14</div><div class="t" style="left:0;width:16.5px;text-align:center;top:300.96px;font-size:8.5px;color:#333">15</div><div class="t" style="left:0;width:16.5px;text-align:center;top:312.70px;font-size:8.5px;color:#333">16</div><div class="t" style="left:0;width:16.5px;text-align:center;top:324.44px;font-size:8.5px;color:#333">17</div><div class="t" style="left:0;width:16.5px;text-align:center;top:336.18px;font-size:8.5px;color:#333">18</div><div class="t" style="left:0;width:16.5px;text-align:center;top:347.92px;font-size:8.5px;color:#333">19</div><div class="t" style="left:0;width:16.5px;text-align:center;top:359.66px;font-size:8.5px;color:#333">20</div><div class="t" style="left:0;width:16.5px;text-align:center;top:371.40px;font-size:8.5px;color:#333">21</div><div class="t" style="left:0;width:16.5px;text-align:center;top:383.14px;font-size:8.5px;color:#333">22</div><div class="t" style="left:0;width:16.5px;text-align:center;top:394.88px;font-size:8.5px;color:#333">23</div><div class="t" style="left:0;width:16.5px;text-align:center;top:406.62px;font-size:8.5px;color:#333">24</div><div class="t" style="left:0;width:16.5px;text-align:center;top:418.36px;font-size:8.5px;color:#333">25</div><div class="t" style="left:0;width:16.5px;text-align:center;top:430.10px;font-size:8.5px;color:#333">26</div><div class="t" style="left:0;width:16.5px;text-align:center;top:441.84px;font-size:8.5px;color:#333">27</div><div class="t" style="left:0;width:16.5px;text-align:center;top:453.58px;font-size:8.5px;color:#333">28</div><div class="t" style="left:0;width:16.5px;text-align:center;top:465.32px;font-size:8.5px;color:#333">29</div><div class="t" style="left:12.73px;width:100px;text-align:center;top:136.90px;font-size:7.9px;font-weight:bold;color:#000">Class Name</div><div class="t" style="left:89.47px;width:100px;text-align:center;top:136.90px;font-size:7.9px;font-weight:bold;color:#000">Shares</div><div class="t" style="left:161.30px;width:100px;text-align:center;top:136.90px;font-size:7.9px;font-weight:bold;color:#000">Ownership %</div><div class="t" style="left:241.25px;width:100px;text-align:center;top:136.90px;font-size:7.9px;font-weight:bold;color:#000">Value $</div><div class="t" style="left:12.73px;width:100px;text-align:center;top:148.64px;font-size:7.9px;font-weight:bold;color:#000">Founders</div><div class="t" style="left:89.47px;width:100px;text-align:center;top:148.64px;font-size:7.8px;font-weight:normal;color:#000">14,000.00</div><div class="t" style="left:161.30px;width:100px;text-align:center;top:148.64px;font-size:7.8px;font-weight:normal;color:#000">32.80%</div><div class="t" style="left:241.25px;width:100px;text-align:center;top:148.64px;font-size:7.8px;font-weight:normal;color:#000">3,280,071.22</div><div class="t" style="left:12.73px;width:100px;text-align:center;top:160.38px;font-size:7.9px;font-weight:bold;color:#000">Series A</div><div class="t" style="left:89.47px;width:100px;text-align:center;top:160.38px;font-size:7.8px;font-weight:normal;color:#000">8,582.95</div><div class="t" style="left:161.30px;width:100px;text-align:center;top:160.38px;font-size:7.8px;font-weight:normal;color:#000">20.11%</div><div class="t" style="left:241.25px;width:100px;text-align:center;top:160.38px;font-size:7.8px;font-weight:normal;color:#000">2,010,906.24</div><div class="t" style="left:12.73px;width:100px;text-align:center;top:172.12px;font-size:7.9px;font-weight:bold;color:#000">Series B</div><div class="t" style="left:89.47px;width:100px;text-align:center;top:172.12px;font-size:7.8px;font-weight:normal;color:#000">6,200.00</div><div class="t" style="left:161.30px;width:100px;text-align:center;top:172.12px;font-size:7.8px;font-weight:normal;color:#000">14.53%</div><div class="t" style="left:241.25px;width:100px;text-align:center;top:172.12px;font-size:7.8px;font-weight:normal;color:#000">1,452,602.97</div><div class="t" style="left:12.73px;width:100px;text-align:center;top:183.86px;font-size:7.9px;font-weight:bold;color:#000">Common Warrants</div><div class="t" style="left:89.47px;width:100px;text-align:center;top:183.86px;font-size:7.8px;font-weight:normal;color:#000">2,000.00</div><div class="t" style="left:161.30px;width:100px;text-align:center;top:183.86px;font-size:7.8px;font-weight:normal;color:#000">4.69%</div><div class="t" style="left:241.25px;width:100px;text-align:center;top:183.86px;font-size:7.8px;font-weight:normal;color:#000">468,581.60</div><div class="t" style="left:12.73px;width:100px;text-align:center;top:195.60px;font-size:7.9px;font-weight:bold;color:#000">Option Pool 1</div><div class="t" style="left:89.47px;width:100px;text-align:center;top:195.60px;font-size:7.8px;font-weight:normal;color:#000">3,900.00</div><div class="t" style="left:161.30px;width:100px;text-align:center;top:195.60px;font-size:7.8px;font-weight:normal;color:#000">9.14%</div><div class="t" style="left:241.25px;width:100px;text-align:center;top:195.60px;font-size:7.8px;font-weight:normal;color:#000">913,734.13</div><div class="t" style="left:12.73px;width:100px;text-align:center;top:207.34px;font-size:7.9px;font-weight:bold;color:#000">Option Pool 2</div><div class="t" style="left:89.47px;width:100px;text-align:center;top:207.34px;font-size:7.8px;font-weight:normal;color:#000">3,000.00</div><div class="t" style="left:161.30px;width:100px;text-align:center;top:207.34px;font-size:7.8px;font-weight:normal;color:#000">7.03%</div><div class="t" style="left:241.25px;width:100px;text-align:center;top:207.34px;font-size:7.8px;font-weight:normal;color:#000">702,872.41</div><div class="t" style="left:12.73px;width:100px;text-align:center;top:219.08px;font-size:7.9px;font-weight:bold;color:#000">Note -2</div><div class="t" style="left:89.47px;width:100px;text-align:center;top:219.08px;font-size:7.8px;font-weight:normal;color:#000">0.00</div><div class="t" style="left:161.30px;width:100px;text-align:center;top:219.08px;font-size:7.8px;font-weight:normal;color:#000">0.00%</div><div class="t" style="left:241.25px;width:100px;text-align:center;top:219.08px;font-size:7.8px;font-weight:normal;color:#000">0.00</div><div class="t" style="left:12.73px;width:100px;text-align:center;top:230.82px;font-size:7.9px;font-weight:bold;color:#000">Note-3</div><div class="t" style="left:89.47px;width:100px;text-align:center;top:230.82px;font-size:7.8px;font-weight:normal;color:#000">0.00</div><div class="t" style="left:161.30px;width:100px;text-align:center;top:230.82px;font-size:7.8px;font-weight:normal;color:#000">0.00%</div><div class="t" style="left:241.25px;width:100px;text-align:center;top:230.82px;font-size:7.8px;font-weight:normal;color:#000">0.00</div><div class="t" style="left:12.73px;width:100px;text-align:center;top:242.56px;font-size:7.9px;font-weight:bold;color:#000">Note -4</div><div class="t" style="left:89.47px;width:100px;text-align:center;top:242.56px;font-size:7.8px;font-weight:normal;color:#000">0.00</div><div class="t" style="left:161.30px;width:100px;text-align:center;top:242.56px;font-size:7.8px;font-weight:normal;color:#000">0.00%</div><div class="t" style="left:241.25px;width:100px;text-align:center;top:242.56px;font-size:7.8px;font-weight:normal;color:#000">0.00</div><div class="t" style="left:12.73px;width:100px;text-align:center;top:254.30px;font-size:7.9px;font-weight:bold;color:#000">Note -5</div><div class="t" style="left:89.47px;width:100px;text-align:center;top:254.30px;font-size:7.8px;font-weight:normal;color:#000">0.00</div><div class="t" style="left:161.30px;width:100px;text-align:center;top:254.30px;font-size:7.8px;font-weight:normal;color:#000">0.00%</div><div class="t" style="left:241.25px;width:100px;text-align:center;top:254.30px;font-size:7.8px;font-weight:normal;color:#000">0.00</div><div class="t" style="left:12.73px;width:100px;text-align:center;top:266.04px;font-size:7.9px;font-weight:bold;color:#000">Note -6</div><div class="t" style="left:89.47px;width:100px;text-align:center;top:266.04px;font-size:7.8px;font-weight:normal;color:#000">0.00</div><div class="t" style="left:161.30px;width:100px;text-align:center;top:266.04px;font-size:7.8px;font-weight:normal;color:#000">0.00%</div><div class="t" style="left:241.25px;width:100px;text-align:center;top:266.04px;font-size:7.8px;font-weight:normal;color:#000">0.00</div><div class="t" style="left:12.73px;width:100px;text-align:center;top:277.78px;font-size:7.9px;font-weight:bold;color:#000">Total</div><div class="t" style="left:89.47px;width:100px;text-align:center;top:277.78px;font-size:7.9px;font-weight:bold;color:#000">37,682.95</div><div class="t" style="left:161.30px;width:100px;text-align:center;top:277.78px;font-size:7.9px;font-weight:bold;color:#000">88.29%</div><div class="t" style="left:241.25px;width:100px;text-align:center;top:277.78px;font-size:7.9px;font-weight:bold;color:#000">8,828,768.57</div><svg width="938" height="499" viewBox="0 0 938 499"><rect x="0" y="470" width="938" height="16" fill="#e6e6e6"/><line x1="0" y1="470.2" x2="938" y2="470.2" stroke="#d0d0d0" stroke-width="0.6"/><path d="M16.8,476.5 L15.5,477.8 L16.8,479.1" fill="none" stroke="#bbb" stroke-width="0.6"/><path d="M30.5,476.5 L31.8,477.8 L30.5,479.1" fill="none" stroke="#bbb" stroke-width="0.6"/><rect x="54.8" y="470" width="87.6" height="14.2" fill="#fff"/><rect x="54.8" y="482.6" width="87.6" height="1.5" fill="#217346"/><line x1="54.8" y1="470" x2="54.8" y2="484" stroke="#c8c8c8" stroke-width="0.6"/><line x1="233.7" y1="472.5" x2="233.7" y2="482" stroke="#bbb" stroke-width="0.6"/><line x1="349.8" y1="472.5" x2="349.8" y2="482" stroke="#bbb" stroke-width="0.6"/><circle cx="372.8" cy="478" r="4.3" fill="none" stroke="#777" stroke-width="0.7"/><path d="M370.4,478 H375.2 M372.8,475.6 V480.4" stroke="#777" stroke-width="0.7"/><g fill="#999"><circle cx="562.7" cy="475.5" r="0.45"/><circle cx="562.7" cy="478" r="0.45"/><circle cx="562.7" cy="480.5" r="0.45"/></g><rect x="571.4" y="473.7" width="355" height="9.2" fill="#fff" stroke="#c8c8c8" stroke-width="0.6"/><rect x="581.3" y="473.9" width="335" height="8.8" fill="#fff" stroke="#c8c8c8" stroke-width="0.6"/><path d="M577.4,476.0 V480.6 L574.9,478.3Z" fill="#222"/><rect x="901" y="473.7" width="16.3" height="9.2" fill="#e6e6e6"/><rect x="917.5" y="473.7" width="8.6" height="9.2" fill="#fff" stroke="#c8c8c8" stroke-width="0.6"/><path d="M920.9,476.0 V480.6 L923.4,478.3Z" fill="#222"/><rect x="0" y="486" width="938" height="13" fill="#f3f3f3"/><rect x="73.3" y="489" width="7.3" height="7" rx="0.6" fill="#f7f7f7" stroke="#666" stroke-width="0.7"/><rect x="73.3" y="489" width="7.3" height="2.4" fill="#444"/><circle cx="74.6" cy="490.2" r="1.0" fill="#222"/><line x1="74.6" y1="493.6" x2="79.3" y2="493.6" stroke="#aaa" stroke-width="0.6"/><path d="M95.5,489.4 Q92.2,490.4 92.2,493.2 Q92.2,495.6 94.5,497" fill="none" stroke="#555" stroke-width="0.8"/><path d="M97,494.8 L98.4,496.8 L101.6,492.6" fill="none" stroke="#333" stroke-width="0.9"/><circle cx="96.6" cy="491.4" r="0.6" fill="#555"/><path d="M95.2,492.6 H98.6" stroke="#555" stroke-width="0.6"/><rect x="756.5" y="486" width="23.5" height="13" fill="#cbcbcb"/><g stroke="#777" stroke-width="0.6" fill="none"><rect x="765" y="489.3" width="7" height="6.4"/><line x1="765" y1="491.4" x2="772" y2="491.4"/><line x1="765" y1="493.6" x2="772" y2="493.6"/><line x1="767.3" y1="489.3" x2="767.3" y2="495.7"/><line x1="769.7" y1="489.3" x2="769.7" y2="495.7"/></g><g stroke="#888" stroke-width="0.6" fill="none"><rect x="789.2" y="489.3" width="7" height="6.4"/><rect x="790.8" y="490.6" width="3.8" height="3.8"/></g><g stroke="#888" stroke-width="0.6" fill="none"><rect x="813.5" y="489.3" width="7" height="6.4"/><path d="M816,489.3 V492 H818"/></g><line x1="833.2" y1="492.5" x2="836.7" y2="492.5" stroke="#666" stroke-width="0.7"/><line x1="840.8" y1="492.5" x2="901.4" y2="492.5" stroke="#aaa" stroke-width="0.8"/><rect x="869.8" y="489.5" width="2.4" height="6" fill="#555"/><path d="M904.9,492.5 H908.5 M906.7,490.7 V494.3" stroke="#666" stroke-width="0.7"/></svg><div class="t" style="left:60.80px;top:474px;font-size:7.97px;color:#217346;font-weight:bold;">Pre-Money by Class</div><div class="t" style="left:150.30px;top:473px;font-size:8.3px;color:#555;font-weight:normal;">Pre-Money by Grant</div><div class="t" style="left:242.00px;top:473px;font-size:8.3px;color:#555;font-weight:normal;">Pre-Money by Shareholder</div><div class="t" style="left:6.80px;top:490px;font-size:6.1px;color:#444;font-weight:normal;">Ready</div><div class="t" style="left:34.80px;top:490px;font-size:6.0px;color:#444;font-weight:normal;">Calculate</div><div class="t" style="left:103.00px;top:490px;font-size:6.45px;color:#444;font-weight:normal;">Accessibility: Good to go</div><div class="t" style="left:917.60px;top:491px;font-size:5.8px;color:#444;font-weight:normal;">100%</div></body></html>
